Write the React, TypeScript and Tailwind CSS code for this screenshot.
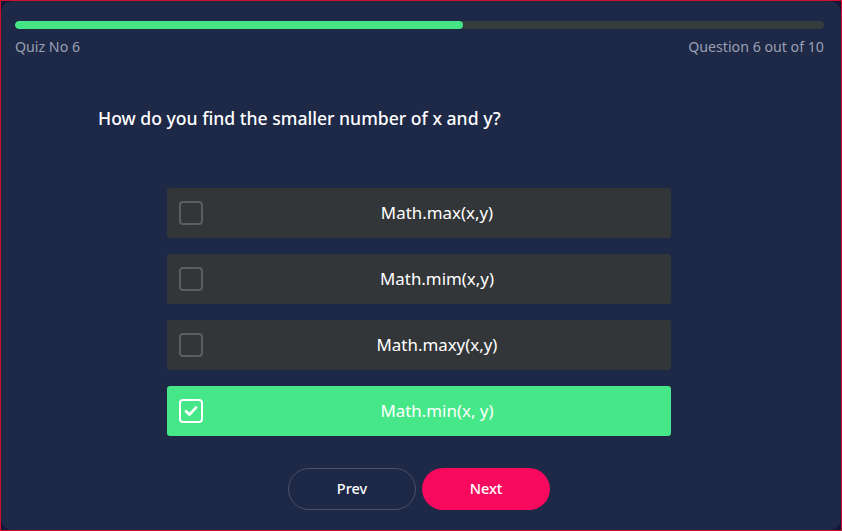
import React from "react";

const options = ["Math.max(x,y)", "Math.mim(x,y)", "Math.maxy(x,y)", "Math.min(x, y)"];

export default function App() {
  const selected = 3;
  return (
    <div className="w-[842px] h-[531px] border border-[#d0102a] bg-[#16173a] overflow-hidden" style={{ fontFamily: '"Noto Sans", sans-serif' }}>
      <div className="w-full h-full rounded-[12px] bg-[#1e2847] flex flex-col pr-[4px]">
        <div className="pl-[14px] pr-[13px] pt-[20px]">
          <div className="h-[8px] rounded-full bg-[#363b3d] overflow-hidden">
            <div className="h-full rounded-full bg-[#45e486]" style={{ width: "55.4%" }} />
          </div>
          <div className="flex justify-between mt-[8px] text-[14.2px] text-[#9aa0b2] leading-[20px]">
            <span>Quiz No 6</span>
            <span>Question 6 out of 10</span>
          </div>
        </div>
        <div className="pl-[97px] mt-[49px] text-[17.6px] font-medium text-white leading-[24px]">
          How do you find the smaller number of x and y?
        </div>
        <div className="mt-[58px] flex flex-col gap-[16px] items-center">
          {options.map((o, i) => {
            const on = i === selected;
            return (
              <div
                key={o}
                className={`w-[504px] h-[50px] rounded-[3px] flex items-center pl-[12px] ${on ? "bg-[#46e788]" : "bg-[#333638]"}`}
              >
                <div
                  className={`w-[24px] h-[24px] rounded-[4px] border-2 flex items-center justify-center ${on ? "border-white" : "border-[#5b5e61]"}`}
                >
                  {on && (
                    <svg width="16" height="16" viewBox="0 0 16 16" fill="none">
                      <path d="M3 8.3 L6.4 11.6 L13 4.6" stroke="white" strokeWidth="2.8" strokeLinecap="round" strokeLinejoin="round" />
                    </svg>
                  )}
                </div>
                <div className="flex-1 text-center text-[16.9px] text-white">{o}</div>
              </div>
            );
          })}
        </div>
        <div className="mt-[32px] flex justify-center gap-[6px]">
          <button className="w-[128px] h-[42px] rounded-full border border-[#4a5268] text-white text-[14.5px] font-medium">Prev</button>
          <button className="w-[128px] h-[42px] rounded-full bg-[#f70a5e] text-white text-[14.5px] font-medium">Next</button>
        </div>
      </div>
    </div>
  );
}
